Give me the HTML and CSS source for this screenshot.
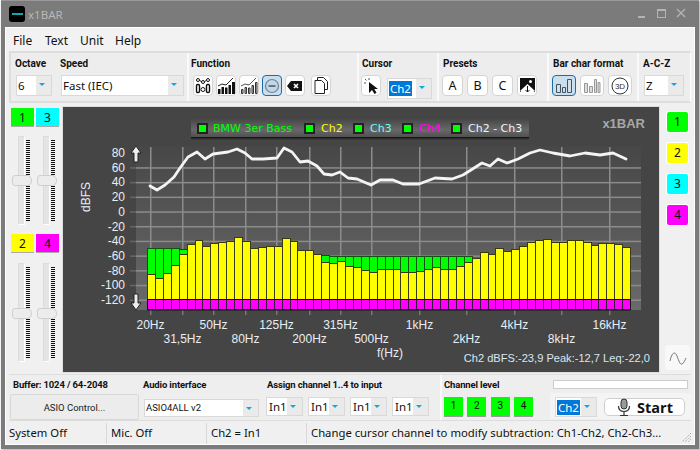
FILE: index.html
```html
<!DOCTYPE html>
<html>
<head>
  <meta charset="utf-8">
  <title>x1BAR</title>
  <link rel="stylesheet" href="styles.css">
</head>
<body>
<div class="window">
  <div class="titlebar">
    <div class="appicon"><span></span></div>
    <div class="apptitle">x1BAR</div>
    <svg class="winbtns" width="50" height="12" viewBox="0 0 50 12">
      <rect x="0" y="8" width="7" height="2" fill="#b4b4b4"/>
      <rect x="19.5" y="1.5" width="8" height="8" fill="none" stroke="#b4b4b4"/>
      <rect x="19" y="1" width="9" height="2" fill="#b4b4b4"/>
      <path d="M39 1l8 8M47 1l-8 8" stroke="#b4b4b4" stroke-width="1.3"/>
    </svg>
  </div>

  <div class="client">
    <div class="menubar">
      <span class="m-file">File</span><span class="m-item">Text</span><span class="m-item">Unit</span><span>Help</span>
    </div>

    <div class="toolbar">
      <div class="group g-sound">
        <div class="label lab-row"><span class="lab-oct">Octave</span><span>Speed</span></div>
        <div class="ctrl-row">
          <div class="combo w-oct"><span class="val">6</span><span class="arrow"></span></div>
          <div class="combo w-speed"><span class="val">Fast (IEC)</span><span class="arrow"></span></div>
        </div>
      </div>
      <div class="group g-func">
        <div class="label">Function</div>
        <div class="ctrl-row gap-3 ind-2">
          <button class="tool">
            <svg width="16" height="17" viewBox="0 0 16 17"><g fill="none" stroke="#111"><circle cx="3" cy="3" r="1.5"/><circle cx="13" cy="3" r="1.5"/><circle cx="8" cy="5" r="1.5"/><path d="M4.500 3.500l2 1M9.500 4.500l2-1"/><rect x="1.500" y="7.500" width="3" height="8" rx="1.200" stroke-width="1.400"/><rect x="11.500" y="7.500" width="3" height="8" rx="1.200" stroke-width="1.400"/><circle cx="8" cy="12.500" r="2"/></g></svg>
          </button>
          <button class="tool">
            <svg width="18" height="17" viewBox="0 0 18 17"><path d="M1 9l4-2 4 1 7-7" fill="none" stroke="#222"/><path d="M1 12h2.500v5H1zM4.500 10h2.500v7H4.500zM8 10.500h2.500V17H8zM11.500 8H14v9h-2.500zM15 5h3v12h-3z" fill="#111"/></svg>
          </button>
          <button class="tool">
            <svg width="18" height="17" viewBox="0 0 18 17"><path d="M1 9l4-2 4 1 7-7" fill="none" stroke="#555"/><path d="M1.500 12.500h1.500v4H1.500zM5 10.500h1.500v6H5zM8.500 11h1.500v5.500H8.500zM12 8.500h1.500v8H12zM15.500 5.500H17v11h-1.500z" fill="#ccc" stroke="#333"/></svg>
          </button>
          <button class="tool on">
            <svg width="16" height="16" viewBox="0 0 16 16"><circle cx="8" cy="8" r="6.500" fill="#c3d6e4" stroke="#6d8597" stroke-width="1.200"/><rect x="4.500" y="7" width="7" height="2" fill="#64788a"/></svg>
          </button>
          <button class="tool">
            <svg width="16" height="12" viewBox="0 0 16 12"><path d="M4 1h11v10H4L0 6z" fill="#111"/><path d="M7 4l4 4M11 4l-4 4" stroke="#fff" stroke-width="1.600"/></svg>
          </button>
          <button class="tool ml-3">
            <svg width="15" height="17" viewBox="0 0 15 17"><path d="M3.500 3.500v-3h6l4 4v8h-3" fill="#fff" stroke="#222"/><path d="M1 3.500h6.500l3 3v10H1z" fill="#fff" stroke="#222"/></svg>
          </button>
        </div>
      </div>
      <div class="group g-cursor">
        <div class="label">Cursor</div>
        <div class="ctrl-row gap-6 out-1">
          <button class="tool">
            <svg width="16" height="17" viewBox="0 0 16 17"><path d="M6 5v11l3-3 2.500 4 2-1.200-2.200-3.800H15z" fill="#111"/><path d="M2 2l1.500 1.500M6 1v2M1 6h2" stroke="#555"/></svg>
          </button>
          <div class="combo w-ch drop"><span class="val sel">Ch2</span><span class="arrow"></span></div>
        </div>
      </div>
      <div class="group g-presets">
        <div class="label">Presets</div>
        <div class="ctrl-row gap-4 out-1">
          <button class="tool preset">A</button>
          <button class="tool preset">B</button>
          <button class="tool preset">C</button>
          <button class="tool">
            <svg width="15" height="15" viewBox="0 0 15 15"><rect width="15" height="14" fill="#111"/><circle cx="10.500" cy="3.500" r="1.500" fill="#fff"/><path d="M0 13l7.500-7 7.500 7-3 2H3z" fill="#fff"/><path d="M7.500 8v6M5.500 12l2 2 2-2" stroke="#111" fill="none"/></svg>
          </button>
        </div>
      </div>
      <div class="group g-bars">
        <div class="label">Bar char format</div>
        <div class="ctrl-row gap-4 out-1">
          <button class="tool wide on">
            <svg width="18" height="15" viewBox="0 0 18 15"><path d="M1.500 6.500h4v8h-4zM7.500 9.500h3v5h-3zM12.500 1.500h4v13h-4z" fill="#d2dfe9" stroke="#44525e"/></svg>
          </button>
          <button class="tool wide">
            <svg width="18" height="15" viewBox="0 0 18 15"><path d="M1.500 5.500h3v9h-3zM6.500 8.500h3v6h-3zM11.500 1.500h2v13h-2zM15 4.500h2v10h-2z" fill="#ddd" stroke="#999"/></svg>
          </button>
          <button class="tool wide">
            <svg width="18" height="18" viewBox="0 0 18 18"><circle cx="9" cy="9" r="8" fill="none" stroke="#333"/><text class="t3d" x="9" y="12">3D</text></svg>
          </button>
        </div>
      </div>
      <div class="group g-acz">
        <div class="label">A-C-Z</div>
        <div class="ctrl-row">
          <div class="combo w-acz"><span class="val">Z</span><span class="arrow"></span></div>
        </div>
      </div>
    </div>

    <div class="middle">
      <div class="channels">
        <div class="strip">
          <div class="chbtns"><div class="chbtn c1">1</div><div class="chbtn c3">3</div></div>
          <div class="faders">
            <div class="fader"><div class="track"></div><div class="ticks"></div><div class="thumb"></div></div>
            <div class="fader"><div class="track"></div><div class="ticks"></div><div class="thumb"></div></div>
          </div>
        </div>
        <div class="strip">
          <div class="chbtns"><div class="chbtn c2">2</div><div class="chbtn c4">4</div></div>
          <div class="faders tall">
            <div class="fader"><div class="track"></div><div class="ticks"></div><div class="thumb"></div></div>
            <div class="fader"><div class="track"></div><div class="ticks"></div><div class="thumb"></div></div>
          </div>
        </div>
      </div>

      <div class="chart">
        <svg id="plot" width="596" height="265" viewBox="63 107 596 265"></svg>
      </div>

      <div class="sidebtns">
        <div class="chbtn side c1">1</div>
        <div class="chbtn side c2">2</div>
        <div class="chbtn side c3">3</div>
        <div class="chbtn side c4">4</div>
        <div class="spacer"></div>
        <button class="sine">
          <svg width="18" height="14" viewBox="0 0 18 14"><path d="M1 10C3 1 6 0 8 5s3 9 5 8 3-4 4-6" fill="none" stroke="#777"/></svg>
        </button>
      </div>
    </div>

    <div class="bottom">
      <div class="bgroup b-asio">
        <div class="label">Buffer: 1024 / 64-2048</div>
        <button class="asio">ASIO Control...</button>
      </div>
      <div class="bgroup b-audio">
        <div class="label">Audio interface</div>
        <div class="combo w-audio"><span class="val small">ASIO4ALL v2</span><span class="arrow"></span></div>
      </div>
      <div class="bgroup b-assign">
        <div class="label">Assign channel 1..4 to input</div>
        <div class="ctrl-row gap-5 out-1">
          <div class="combo w-in"><span class="val">In1</span><span class="arrow"></span></div>
          <div class="combo w-in"><span class="val">In1</span><span class="arrow"></span></div>
          <div class="combo w-in"><span class="val">In1</span><span class="arrow"></span></div>
          <div class="combo w-in"><span class="val">In1</span><span class="arrow"></span></div>
        </div>
      </div>
      <div class="bgroup b-level">
        <div class="label">Channel level</div>
        <div class="ctrl-row levels">
          <div class="lvl">1</div><div class="lvl">2</div><div class="lvl">3</div><div class="lvl">4</div>
        </div>
      </div>
      <div class="b-start">
        <div class="progress"></div>
        <div class="startrow">
          <div class="combo w-ch2"><span class="val sel">Ch2</span><span class="arrow"></span></div>
          <button class="start">
            <svg width="16" height="19" viewBox="0 0 16 19"><rect x="5" y="1" width="6" height="10" rx="3" fill="#999" stroke="#333"/><path d="M2.500 8c0 4 2 5.500 5.500 5.500S13.500 12 13.500 8M8 13.500V17M4 17.500h8" fill="none" stroke="#333" stroke-width="1.200"/></svg>
            <span>Start</span>
          </button>
        </div>
      </div>
    </div>

    <div class="statusbar">
      <div class="cell">System Off</div>
      <div class="cell">Mic. Off</div>
      <div class="cell">Ch2 = In1</div>
      <div class="cell last">Change cursor channel to modify subtraction: Ch1-Ch2, Ch2-Ch3...</div>
      <svg class="grip" width="11" height="11" viewBox="0 0 11 11"><path d="M10 1L1 10M10 4l-6 6M10 7l-3 3" stroke="#aaa" stroke-dasharray="1.500 1"/></svg>
    </div>
  </div>
</div>
<script src="chart.js"></script>
</body>
</html>
```

FILE: styles.css
```css
*{
  box-sizing: border-box;
}
html, body{
  margin: 0;
  height: 100%;
  background-color: #fafafa;
  font-family: "Noto Sans",sans-serif;
  font-size: 12px;
  color: #111;
  overflow: hidden;
}
button{
  font-family: inherit;
  padding: 0;
  margin: 0;
}

/* window frame */
.window{
  width: 698px;
  height: 449px;
  margin-left: 1px;
  padding: 0 4px 4px 4px;
  background-color: #7b7b7b;
  border-top: 1px solid #999;
  display: flex;
  flex-direction: column;
  box-shadow: 1px 1px 2px #aaa;
}
.titlebar{
  height: 26px;
  flex: none;
  display: flex;
  align-items: center;
  padding-left: 4px;
}
.appicon{
  width: 16px;
  height: 16px;
  background-color: #000;
  border-radius: 3px;
  display: flex;
  align-items: center;
  justify-content: center;
}
.appicon span{
  width: 11px;
  height: 2px;
  background-color: #1aa;
}
.apptitle{
  margin-left: 3px;
  font-size: 11.500px;
  color: #b8b8b8;
}
.winbtns{
  margin-left: auto;
  margin-right: 7px;
}
.client{
  flex: 1;
  min-height: 0;
  background-color: #f0f0f0;
  border: 1px solid #fff;
  display: flex;
  flex-direction: column;
}

/* menu */
.menubar{
  height: 23px;
  flex: none;
  display: flex;
  align-items: center;
  padding: 1px 0 0 7px;
  font-size: 12px;
  background-color: #f2f2f2;
}
.m-file{ width: 32px; }
.m-item{ width: 35px; }

/* toolbar */
.toolbar{
  height: 52px;
  flex: none;
  margin: 0 3px 0 3px;
  display: flex;
  border: 1px solid #fff;
  border-left: 2px solid #ddd;
  border-top: 2px solid #ddd;
  border-bottom: 2px solid #ddd;
  background-color: #ededed;
}
.group{
  border-right: 2px solid #fafafa;
  padding: 3px 0 0 3px;
  display: flex;
  flex-direction: column;
}
.g-sound{ width: 178px; padding-left: 4px; }
.g-func{ width: 170px; padding-left: 2px; }
.g-cursor{ width: 80px; padding-left: 3px; }
.g-presets{ width: 110px; padding-left: 4px; }
.g-bars{ width: 90px; padding-left: 4px; }
.g-acz{ flex: 1; border-right: none; padding-left: 5px; }
.g-acz .label{ margin-left: -1px; }

.label{
  font-family: Roboto,sans-serif;
  font-size: 10px;
  font-weight: 700;
  line-height: 15px;
  height: 15px;
  white-space: nowrap;
}
.lab-row{
  display: flex;
}
.lab-oct{
  width: 45px;
}
.ctrl-row{
  display: flex;
  align-items: flex-start;
  margin-top: 4px;
}
.gap-3{ gap: 3px; }
.gap-4{ gap: 4px; }
.gap-5{ gap: 5px; }
.gap-6{ gap: 6px; }
.ml-3{ margin-left: 3px; }
.ind-2{ margin-left: 2px; }
.out-1{ margin-left: -1px; }

.combo{
  height: 21px;
  display: flex;
  align-items: stretch;
  background-color: #fff;
  border: 1px solid #d9d9d9;
}
.combo .val{
  flex: 1;
  padding-left: 1px;
  font-size: 11.500px;
  line-height: 19px;
  white-space: nowrap;
}
.combo .val.small{
  font-family: Roboto,sans-serif;
  font-size: 9.500px;
}
.combo .val.sel{
  flex: none;
  background-color: #0078d7;
  color: #fff;
  height: 15px;
  line-height: 15px;
  margin: 2px auto 0 1px;
  padding: 0 1px;
}
.combo .arrow{
  width: 15px;
  flex: none;
  background-color: #eaeaea;
  position: relative;
}
.combo .arrow::after{
  content: "";
  position: absolute;
  left: 3px;
  top: 7px;
  border-left: 3px solid transparent;
  border-right: 3px solid transparent;
  border-top: 3px solid #10a8e0;
}
.w-oct{ width: 36px; margin-left: 1px; margin-right: 9px; }
.w-speed{ width: 123px; }
.w-ch{ width: 45px; margin-top: 3px; }
.w-acz{ width: 40px; }
.w-audio{ width: 115px; height: 18px; margin: 7px 0 0 1px; }
.w-audio .val{ line-height: 16px; }
.w-in{ width: 37px; height: 19px; }
.w-in .val{ line-height: 17px; padding-left: 2px; }
.w-ch2{ width: 42px; height: 20px; }

.tool{
  width: 20px;
  height: 21px;
  flex: none;
  background-color: #fff;
  border: 1px solid #d4d4d4;
  border-radius: 4px;
  display: flex;
  align-items: center;
  justify-content: center;
}
.tool.on{
  background-color: #c9dfee;
  border-color: #1f6ba5;
  border-width: 1.500px;
}
.tool.wide{
  width: 24px;
}
.tool.preset{
  font-size: 12.500px;
  color: #111;
  width: 21px;
}
.t3d{
  font-size: 8px;
  font-family: "Liberation Sans",sans-serif;
  text-anchor: middle;
  fill: #333;
}

/* middle */
.middle{
  height: 266px;
  flex: none;
  margin-top: 4px;
  display: flex;
  padding-left: 3px;
}
.channels{
  width: 51px;
  flex: none;
  display: flex;
  flex-direction: column;
}
.strip{
  display: flex;
  flex-direction: column;
  margin-bottom: 8px;
}
.chbtns{
  display: flex;
  padding: 1px 0 0 2px;
  gap: 2px;
}
.chbtn{
  width: 23px;
  height: 19px;
  font-size: 12px;
  line-height: 19px;
  text-align: center;
  border-bottom: 1px solid #aaa;
  color: #111;
}
.c1{ background-color: #00ff00; }
.c2{ background-color: #ffff00; }
.c3{ background-color: #00ffff; }
.c4{ background-color: #ff00ff; }
.faders{
  display: flex;
  height: 98px;
  padding-top: 9px;
  gap: 4px;
  padding-left: 3px;
}
.faders.tall{
  height: 109px;
  padding-top: 10px;
}
.fader{
  position: relative;
  width: 21px;
}
.track{
  position: absolute;
  left: 6px;
  top: 0;
  bottom: 0;
  width: 7px;
  background-color: #e4e4e4;
  border: 1px solid #fff;
  border-color: #dcdcdc #fff #fff #dcdcdc;
}
.ticks{
  position: absolute;
  left: 14px;
  top: 4px;
  bottom: 4px;
  width: 4px;
  background: repeating-linear-gradient(to bottom, #111 0, #111 1px, transparent 1px, transparent 2px);
}
.thumb{
  position: absolute;
  left: 0;
  top: 39px;
  width: 20px;
  height: 11px;
  background-color: #ececec;
  border: 1px solid #cfcfcf;
  border-radius: 3px 5px 5px 3px;
}
.tall .thumb{
  top: 45px;
}

.chart{
  width: 596px;
  height: 265px;
  flex: none;
  background-color: #454545;
  margin-left: 3px;
  box-shadow: 0 0 0 1px #ddd;
}
#plot{
  display: block;
}
.axis{
  font-family: "Liberation Sans",sans-serif;
  font-size: 12px;
  fill: #e8eef4;
}
.readout{
  font-family: "Liberation Sans",sans-serif;
  font-size: 11.100px;
  fill: #dbe6f2;
}
.legend{
  font-family: "DejaVu Sans",sans-serif;
  font-size: 11px;
}
.logo{
  font-family: "Liberation Sans",sans-serif;
  font-size: 13px;
  font-weight: bold;
  fill: #a8a8a8;
}

.sidebtns{
  width: 31px;
  flex: none;
  margin-left: 3px;
  display: flex;
  flex-direction: column;
  align-items: center;
  padding-top: 5px;
  gap: 11px;
}
.chbtn.side{
  width: 21px;
  height: 20px;
  border: none;
  border-radius: 2px;
  box-shadow: 0 0 0 1px #fff;
  line-height: 20px;
}
.spacer{
  flex: 1;
}
.sine{
  width: 25px;
  height: 25px;
  background-color: #f8f8f8;
  border: none;
  border-radius: 4px;
  display: flex;
  align-items: center;
  justify-content: center;
  margin-bottom: 3px;
}

/* bottom */
.bottom{
  height: 47px;
  flex: none;
  margin: 1px 3px 0 3px;
  display: flex;
  background-color: #eee;
  border: 1px solid #ddd;
  border-width: 1px 0 1px 0;
}
.bottom .label{
  font-size: 9.500px;
  letter-spacing: -0.150px;
}
.bgroup{
  display: flex;
  flex-direction: column;
  padding-top: 2px;
}
.b-asio{ width: 134px; padding-left: 4px; }
.b-audio{ width: 124px; }
.b-assign{ width: 173px; }
.b-level{ width: 110px; border-left: 2px solid #fafafa; padding-left: 2px; }
.b-assign .ctrl-row, .b-level .ctrl-row{ margin-top: 5px; }
.asio{
  width: 129px;
  height: 26px;
  margin: 2px 0 0 -3px;
  background-color: #ececec;
  border: 1px solid #d8d8d8;
  border-radius: 2px;
  font-family: Roboto,sans-serif;
  font-size: 9.500px;
  color: #222;
}
.levels{
  gap: 4.400px;
}
.lvl{
  width: 19px;
  height: 20px;
  background-color: #00ff00;
  border-bottom: 1px solid #999;
  font-family: Roboto,sans-serif;
  font-size: 10px;
  line-height: 18px;
  text-align: center;
}
.b-start{
  flex: 1;
  display: flex;
  flex-direction: column;
  padding: 5px 3px 0 3px;
}
.progress{
  height: 9px;
  background-color: #fff;
  border: 1px solid #ccc;
}
.startrow{
  display: flex;
  align-items: center;
  margin: 4px -3px 0 -3px;
  gap: 7px;
  padding: 4px 0 2px 5px;
  background-color: #f4f4f4;
}
.start{
  width: 81px;
  height: 18px;
  background-color: #fff;
  border: 1px solid #d0d0d0;
  border-radius: 5px;
  display: flex;
  align-items: center;
  justify-content: center;
  gap: 5px;
  font-family: "Open Sans",sans-serif;
  font-size: 14.500px;
  font-weight: 700;
  color: #111;
}

/* status bar */
.statusbar{
  flex: 1;
  margin: 2px 0 0 3px;
  display: flex;
  align-items: center;
  font-size: 11.300px;
  position: relative;
  background-color: #f0f0f0;
}
.cell{
  width: 100px;
  height: 100%;
  line-height: 20px;
  padding-left: 4px;
  border-right: 1px solid #d8d8d8;
  white-space: nowrap;
}
.cell:first-child{
  width: 98px;
  padding-left: 0;
}
.cell.last{
  width: auto;
  border: 0;
}
.grip{
  position: absolute;
  right: 2px;
  bottom: 1px;
}
```

FILE: chart.js
```js
var NS = 'http://www.w3.org/2000/svg';
var svg = document.querySelector('#plot');

function el(name, attrs, text){
  var e = document.createElementNS(NS, name);
  for(var k in attrs){ e.setAttribute(k, attrs[k]); }
  if(text){ e.textContent = text; }
  svg.appendChild(e);
  return e;
}

// plot background
var defs = el('defs', {});
defs.innerHTML = '<linearGradient id="bg" x1="0" y1="0" x2="0" y2="1"><stop offset="0" stop-color="#474747"/><stop offset="1" stop-color="#6a6a6a"/></linearGradient>'
  + '<linearGradient id="lg" x1="0" y1="0" x2="0" y2="1"><stop offset="0" stop-color="#474747"/><stop offset="0.6" stop-color="#686868"/><stop offset="1" stop-color="#505050"/></linearGradient>'
  + '<linearGradient id="sh" x1="0" y1="0" x2="0" y2="1"><stop offset="0" stop-color="#000"/><stop offset="1" stop-color="#454545"/></linearGradient>';
el('rect', {x:136, y:146, width:505, height:164, fill:'url(#bg)'});

// grid and axis labels
var vx = [150,182,213,245,276,309,340,371,419,466,514,561,609];
var hz = ['20Hz','31,5Hz','50Hz','80Hz','125Hz','200Hz','315Hz','500Hz','1kHz','2kHz','4kHz','8kHz','16kHz'];
vx.forEach(function(x, i){
  el('rect', {x:x, y:147, width:1.5, height:163, fill:'#8c8c8c'});
  el('rect', {x:x, y:310, width:1.5, height:5, fill:'#777'});
  el('text', {x:x+0.5, y:i%2 ? 343 : 329, 'text-anchor':'middle', class:'axis'}, hz[i]);
});
var dbs = ['80','60','40','20','0','-20','-40','-60','-80','-100','-120'];
dbs.forEach(function(d, i){
  var y = 153 + i*14.7;
  if(i>0){
    el('rect', {x:130, y:y-0.5, width:6, height:1.5, fill:'#666'});
    el('rect', {x:136, y:y-0.5, width:505, height:1.5, fill:'#8c8c8c'});
  }
  el('text', {x:125, y:y+4, 'text-anchor':'end', class:'axis'}, d);
});
el('text', {x:390, y:357, 'text-anchor':'middle', class:'axis'}, 'f(Hz)');
el('text', {x:0, y:0, 'text-anchor':'middle', class:'axis', transform:'translate(90,197) rotate(-90)'}, 'dBFS');
el('text', {x:650, y:362, 'text-anchor':'end', class:'readout'}, 'Ch2 dBFS:-23,9 Peak:-12,7 Leq:-22,0');
el('text', {x:645, y:128, 'text-anchor':'end', class:'logo'}, 'x1BAR');

// bars, tops read off the picture
var tops = [163,175,160,135,102,72,60,78,69,66,63,51,64,84,81,78,78,55,64,91,91,102,126,130,124,139,142,151,157,148,148,148,
  155,155,152,148,142,146,148,139,127,115,97,102,85,93,87,78,66,60,57,66,66,60,60,66,75,69,69,72,81];
var pitch = 7.92;
var yOf = function(z){ return Math.round(220 + z/3) + 0.5; };
tops.forEach(function(z, i){
  var x = Math.round(147 + i*pitch) + 0.5;
  var w = Math.round(147 + (i+1)*pitch) - Math.round(147 + i*pitch);
  var y = yOf(z);
  var g = 0;
  if(i<4){ g = 84; }
  if(i==4){ g = 88; }
  if(i>=22 && i<=40){ g = i==22 ? 105 : 108; }
  if(g && g<z){
    el('rect', {x:x, y:yOf(g), width:w, height:y-yOf(g), fill:'#00ff00', stroke:'#145014'});
  }
  el('rect', {x:x, y:y, width:w, height:299.5-y, fill:'#ffff00', stroke:'#3a3a10'});
  el('rect', {x:x, y:299.5, width:w, height:10, fill:'#ff00ff', stroke:'#3c1a3c'});
});
el('path', {d:'M147.500 299.500H630.500V310H147.500z', fill:'none', stroke:'#111'});

// white curve
var curve = [[150,186],[157,190],[165,185],[174,177],[180,168],[188,157],[197,152],[205,159],[213,154],[228,152],[237,149],[245,153],[252,159],[263,159],[277,158],[284,148],[292,152],[300,162],[308,161],[317,166],[324,174],[332,175],[340,172],[348,178],[357,179],[371,185],[380,180],[393,180],[403,184],[419,184],[435,178],[452,179],[463,175],[482,163],[490,166],[498,159],[507,163],[518,159],[530,153],[540,150],[553,153],[570,156],[585,153],[600,155],[613,153],[626,159]];
el('polyline', {points:curve.map(function(p){return p.join(',');}).join(' '), fill:'none', stroke:'#f4f4f4', 'stroke-width':2.8, 'stroke-linejoin':'round', 'stroke-linecap':'round'});

// scroll arrows
function arrow(d){ el('path', {d:d, fill:'#eee', stroke:'#222'}); }
arrow('M136 146l-5 7h3v9h4v-9h3z');
arrow('M136 310l-5-7h3v-9h4v9h3z');

// legend
el('rect', {x:191, y:136, width:338, height:4, fill:'url(#sh)'});
el('rect', {x:191, y:119, width:338, height:18, fill:'url(#lg)'});
var legend = [[198,'BMW 3er Bass','#00ff00',213],[305,'Ch2','#ffff00',321],[354,'Ch3','#66ffff',370],[403,'Ch4','#ff00ff',419],[452,'Ch2 - Ch3','#f0f4ff',468]];
legend.forEach(function(l){
  el('rect', {x:l[0], y:124, width:9, height:9, fill:'#00ff00', stroke:'#222', 'stroke-width':2});
  el('text', {x:l[3], y:132, fill:l[2], class:'legend'}, l[1]);
});
```
